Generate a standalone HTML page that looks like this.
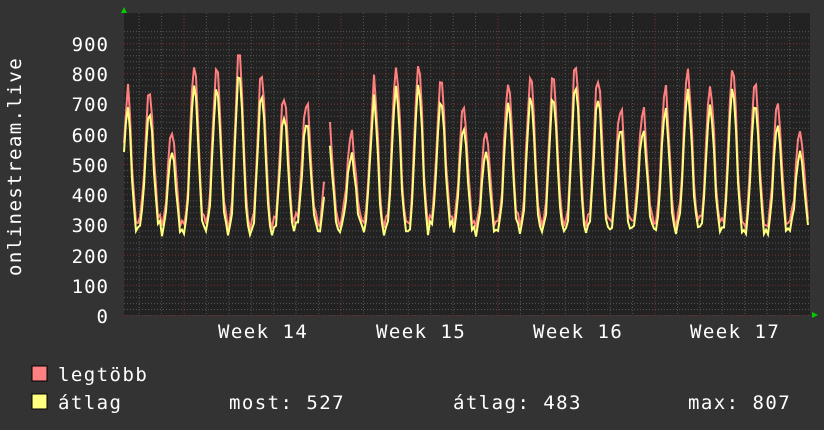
<!DOCTYPE html>
<html><head><meta charset="utf-8"><style>
html,body{margin:0;padding:0;background:#333;width:824px;height:430px;overflow:hidden}
svg{display:block}
text{font-family:"DejaVu Sans Mono","Liberation Mono",monospace;fill:#fff}
</style></head><body>
<svg id="s" width="824" height="430" xmlns="http://www.w3.org/2000/svg">
<rect x="0" y="0" width="824" height="430" fill="#333"/>
<rect x="124" y="13" width="686" height="302" fill="#222"/>
<g id="grid"></g>
<polyline id="red" fill="none" stroke="#ff7f7f" stroke-width="2" points=""/>
<polyline id="red2" fill="none" stroke="#ff7f7f" stroke-width="2" points=""/>
<polyline id="yel" fill="none" stroke="#ffff7f" stroke-width="2" points=""/>
<polyline id="yel2" fill="none" stroke="#ffff7f" stroke-width="2" points=""/>
<polygon points="121,13 127,13 124,7" fill="#0c0"/>
<polygon points="812,312 812,318 818,315" fill="#0c0"/>
<g font-size="19" text-anchor="end" letter-spacing="1">
<text x="109" y="51">900</text><text x="109" y="81">800</text><text x="109" y="111">700</text>
<text x="109" y="142">600</text><text x="109" y="172">500</text><text x="109" y="202">400</text>
<text x="109" y="232">300</text><text x="109" y="263">200</text><text x="109" y="293">100</text>
<text x="109" y="323">0</text>
</g>
<text font-size="19" letter-spacing="1.45" transform="translate(21,276) rotate(-90)">onlinestream.live</text>
<g font-size="19" letter-spacing="1.45">
<text x="218" y="338">Week 14</text><text x="376" y="338">Week 15</text>
<text x="533" y="338">Week 16</text><text x="690" y="338">Week 17</text>
</g>
<rect x="32" y="366" width="15" height="15" fill="#ff8080" stroke="#000"/>
<rect x="32" y="394" width="15" height="15" fill="#ffff80" stroke="#000"/>
<g font-size="19" letter-spacing="1.45">
<text x="58" y="381">legtöbb</text>
<text x="58" y="409">átlag</text>
<text x="229" y="409">most: 527</text>
<text x="453" y="409">átlag: 483</text>
<text x="688" y="409">max: 807</text>
</g>
</svg>
<script>
(function(){
var g=document.getElementById('grid'),h='';
function ln(x1,y1,x2,y2,c,d){h+='<line x1="'+x1+'" y1="'+y1+'" x2="'+x2+'" y2="'+y2+'" stroke="'+c+'" stroke-width="1"'+(d?' stroke-dasharray="1,2"':'')+'/>';}
for(var v=0;v<=950;v+=20){var y=315.5-v*0.302;if(y<14)break;ln(124,y.toFixed(1),810,y.toFixed(1),v%100==0?'#7a3030':'#555',true);}
for(var k=-3;k<=28;k++){var x=184+k*22.43;if(x<125||x>809)continue;ln(x.toFixed(1),13,x.toFixed(1),315,k%7==0?'#7a3030':'#555',true);}
g.innerHTML=h;
var peaks=[710,670,540,760,750,800,730,660,640,560,530,720,750,760,710,620,540,700,720,720,760,720,620,610,680,740,690,750,700,630,540];
var base=[280,300,270,280,290,275,270,280,300,275,300,270,285,270,300,280,270,290,280,285,275,290,280,290,275,300,285,280,270,275,290];
function Y(v){return (315-v*0.302).toFixed(1);}
var ry=[],rz=[],yy=[],yz=[];
for(var x=124;x<=808;x+=2){
 var t=(x-127)/22.43,i=Math.round(t);if(i<0)i=0;if(i>=peaks.length)i=peaks.length-1;
 var ph=t-Math.round(t);var f=Math.pow((1+Math.cos(ph*2*Math.PI))/2,1.6);
 var pk=peaks[i],b=base[i];var jit=Math.sin(x*1.7)*12;
 var yv=b+(pk-b)*f+jit;var rv=yv+(25+45*f)+Math.sin(x*0.9)*10;
 if(x<127){yv=540+(x-124)*50;rv=yv+30;}
 var gap=(x>324&&x<330)||(x>368&&x<374);
 var second=x>=330;
 if(gap)continue;
 (second?yz:yy).push(x+','+Y(yv));(second?rz:ry).push(x+','+Y(rv));
}
document.getElementById('red').setAttribute('points',ry.join(' '));
document.getElementById('red2').setAttribute('points',rz.join(' '));
document.getElementById('yel').setAttribute('points',yy.join(' '));
document.getElementById('yel2').setAttribute('points',yz.join(' '));
})();
</script>
</body></html>
